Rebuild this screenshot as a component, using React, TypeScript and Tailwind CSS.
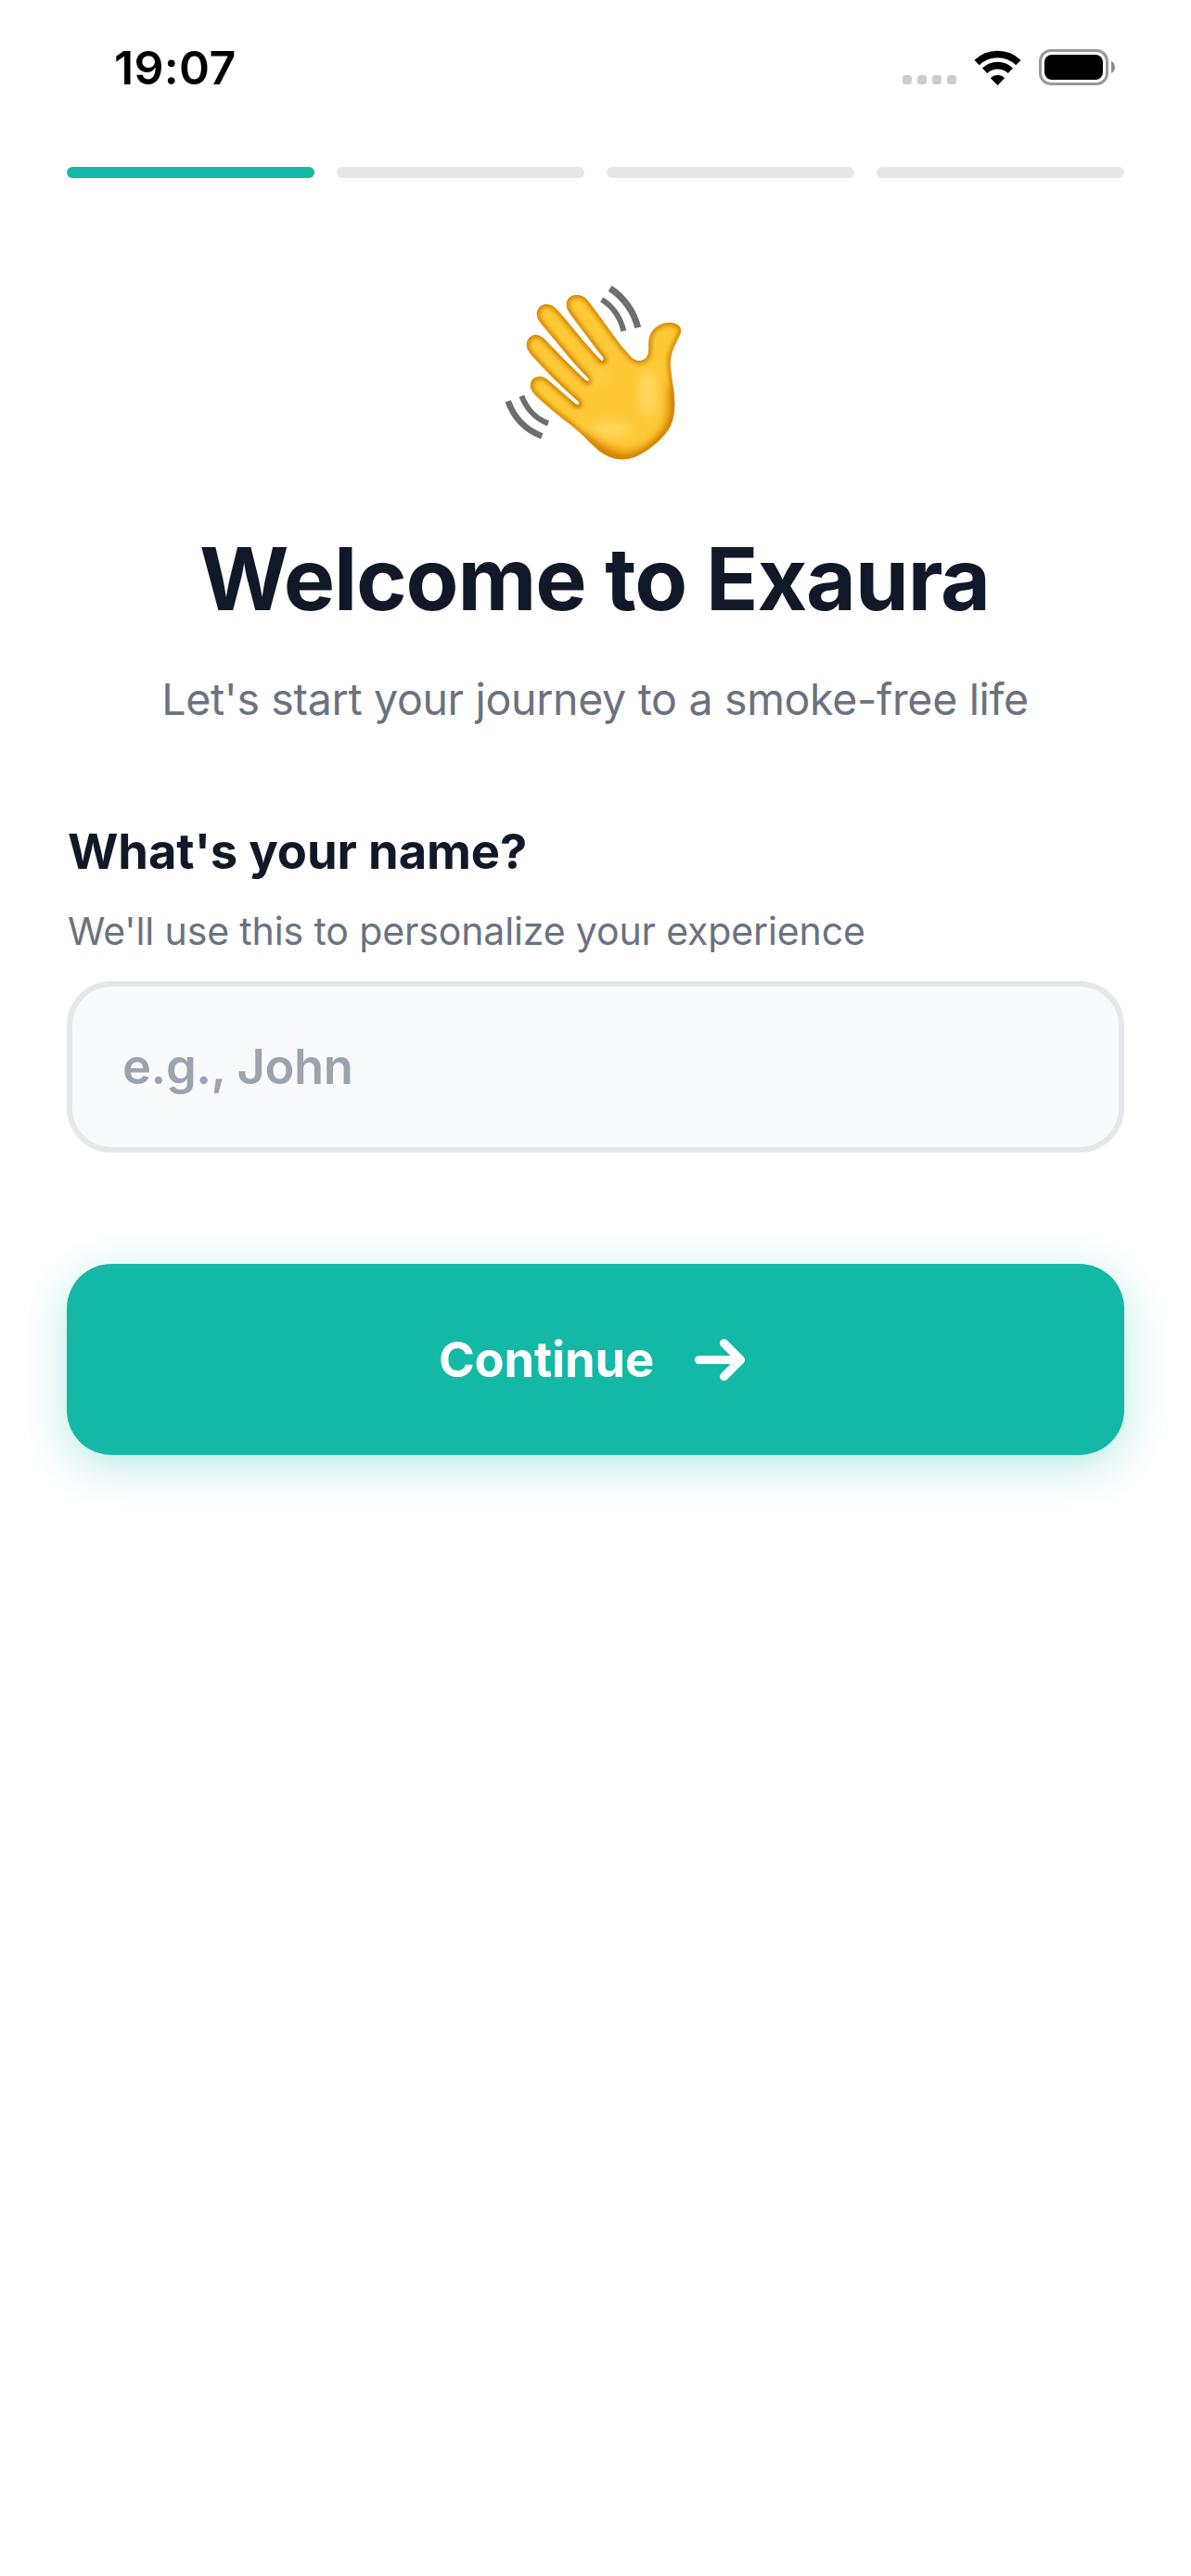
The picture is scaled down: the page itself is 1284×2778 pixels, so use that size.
const HAND =
  "M643 200 C643 183 625 172 604 173 C570 175 545 195 539 225 C535 245 541 262 534 279 C528 294 514 298 501 296 C485 293 474 276 463 264 C430 226 390 165 346 108 C332 88 318 83 302 84 C284 85 271 98 272 117 C272 130 281 142 290 154 C322 196 362 252 390 286 C394 292 390 299 384 296 C335 246 290 186 243 133 C230 119 220 113 206 114 C188 115 175 130 176 148 C177 163 187 174 198 187 C240 237 290 302 343 354 C347 360 342 366 335 361 C290 320 245 272 203 229 C193 219 184 213 172 213 C155 214 142 229 143 247 C144 262 153 273 164 285 C209 334 258 384 311 430 C316 436 311 442 303 438 C275 414 245 387 217 363 C207 354 197 348 185 348 C168 348 154 361 155 379 C156 393 168 406 180 417 C230 464 268 489 312 527 C340 551 366 582 395 600 C427 621 473 621 505 603 C545 582 580 553 602 520 C618 494 622 465 622 436 C622 395 611 350 608 306 C610 262 630 235 641 210 Z";

function WavingHand() {
  return (
    <svg viewBox="0 0 720 690" className="mr-1 h-[230px] w-[240px]" role="img" aria-label="Waving hand">
      <defs>
        <clipPath id="hand-clip">
          <path d={HAND} />
        </clipPath>
        <filter id="soft-edge" x="-20%" y="-20%" width="140%" height="140%">
          <feGaussianBlur stdDeviation="8" />
        </filter>
        <filter id="soft-wide" x="-50%" y="-50%" width="200%" height="200%">
          <feGaussianBlur stdDeviation="18" />
        </filter>
      </defs>
      <g clipPath="url(#hand-clip)">
        <path d={HAND} fill="#ffc936" />
        <path
          d="M330 545 C400 625 480 640 550 590 C620 540 640 480 625 380"
          fill="none"
          stroke="#d98200"
          strokeWidth="50"
          filter="url(#soft-wide)"
        />
        <path d={HAND} fill="none" stroke="#d08206" strokeWidth="18" filter="url(#soft-edge)" />
        <path d="M296 432 L318 444 M330 356 L350 368 M380 292 L400 302" stroke="#b96f00" strokeWidth="10" filter="url(#soft-edge)" />
        <ellipse cx="535" cy="400" rx="30" ry="75" fill="#ffdb6b" opacity="0.85" filter="url(#soft-wide)" />
        <ellipse cx="415" cy="520" rx="70" ry="26" fill="#ffdb66" opacity="0.85" filter="url(#soft-wide)" />
        <ellipse cx="380" cy="350" rx="30" ry="22" fill="#ffd659" opacity="0.7" filter="url(#soft-wide)" />
      </g>
      <g fill="none" stroke="#6e6e6e">
        <path d="M413 63 C456 91 491 138 503 190" strokeWidth="21" />
        <path d="M386 99 C423 122 447 159 457 201" strokeWidth="18" />
        <path d="M83 428 C103 483 142 522 193 541" strokeWidth="20" />
        <path d="M127 411 C143 452 174 485 213 500" strokeWidth="18" />
      </g>
    </svg>
  );
}

function StatusBar() {
  return (
    <header className="flex h-[145px] items-center justify-between pr-[82px] pl-[123px] text-black">
      <span className="text-[50px] leading-[60px] font-semibold tracking-[0.35px]">19:07</span>
      <div className="flex h-[39px] items-center">
        <div className="mr-[19px] flex gap-[6px] self-end pb-[1px]">
          {[0, 1, 2, 3].map((dot) => (
            <span key={dot} className="size-[10px] rounded-[3.5px] bg-[#cccccc]" />
          ))}
        </div>
        <svg viewBox="0 0 51 38" className="mr-[19px] h-[38px] w-[51px]">
          <g fill="none" stroke="#000" strokeWidth="7.6">
            <path d="M3.1 13.6 A32.2 32.2 0 0 1 47.9 13.6" />
            <path d="M11.6 22.2 A20.2 20.2 0 0 1 39.4 22.2" />
          </g>
          <path d="M25.5 38 L17.9 30.2 A10.8 10.8 0 0 1 33.1 30.2 Z" fill="#000" />
        </svg>
        <div className="flex items-center gap-[3px]">
          <div className="h-[39px] w-[75px] rounded-[13px] border-3 border-[#999999] p-[3px]">
            <div className="h-full w-full rounded-[8px] bg-black" />
          </div>
          <svg viewBox="0 0 4 13" className="h-[13px] w-[4px]">
            <path d="M0 0 C2.6 1.2 4 3.6 4 6.5 C4 9.4 2.6 11.8 0 13 Z" fill="#8f8f8f" />
          </svg>
        </div>
      </div>
    </header>
  );
}

function Progress({ step, total }: { step: number; total: number }) {
  return (
    <div className="mt-[35px] flex gap-6">
      {Array.from({ length: total }, (_, i) => (
        <div key={i} className={`h-3 flex-1 rounded-full ${i < step ? "bg-[#14b8a6]" : "bg-gray-200"}`} />
      ))}
    </div>
  );
}

export default function App() {
  return (
    <div className="min-h-[2778px] w-[1284px] bg-white font-[Inter,sans-serif]">
      <StatusBar />
      <main className="flex flex-col px-[72px]">
        <Progress step={1} total={4} />
        <div className="mt-[98px] flex flex-col items-center">
          <WavingHand />
          <h1 className="mt-[47px] mr-[2px] text-[93px] leading-[114px] font-bold tracking-[-1.15px] whitespace-nowrap text-[#111827]">
            Welcome to Exaura
          </h1>
          <p className="mt-[37px] mr-px text-[46.5px] leading-[72px] tracking-[-0.33px] whitespace-nowrap text-[#6b7280]">
            Let's start your journey to a smoke-free life
          </p>
        </div>
        <form className="mt-[98px] flex flex-col">
          <label htmlFor="name" className="pl-px text-[52.5px] leading-[60px] font-bold tracking-[-0.11px] text-[#111827]">
            What's your name?
          </label>
          <p className="mt-[29px] pl-px text-[41px] leading-[54px] tracking-[-0.13px] text-[#6b7280]">
            We'll use this to personalize your experience
          </p>
          <input
            id="name"
            type="text"
            placeholder="e.g., John"
            className="mt-[27px] h-[185px] rounded-[48px] border-6 border-gray-200 bg-[#f9fafb] pb-[2px] pl-[54px] text-[52.5px] font-semibold tracking-[-0.45px] text-[#111827] placeholder:text-[#9ca3af]"
          />
          <button
            type="button"
            className="mt-[120px] flex h-[206px] items-center rounded-[48px] bg-[#14b8a6] pl-[401px] text-white shadow-[0_12px_48px_rgba(20,184,166,0.3)]"
          >
            <span className="w-[276px] text-left text-[52.5px] leading-[60px] font-bold tracking-[-0.22px]">Continue</span>
            <svg viewBox="0 0 54 46" className="h-[46px] w-[54px]">
              <path
                d="M4.5 23.5 H49.5 M31.5 5.5 L49.5 23.5 L31.5 41.5"
                fill="none"
                stroke="currentColor"
                strokeWidth="9"
                strokeLinecap="round"
                strokeLinejoin="round"
              />
            </svg>
          </button>
        </form>
      </main>
    </div>
  );
}
